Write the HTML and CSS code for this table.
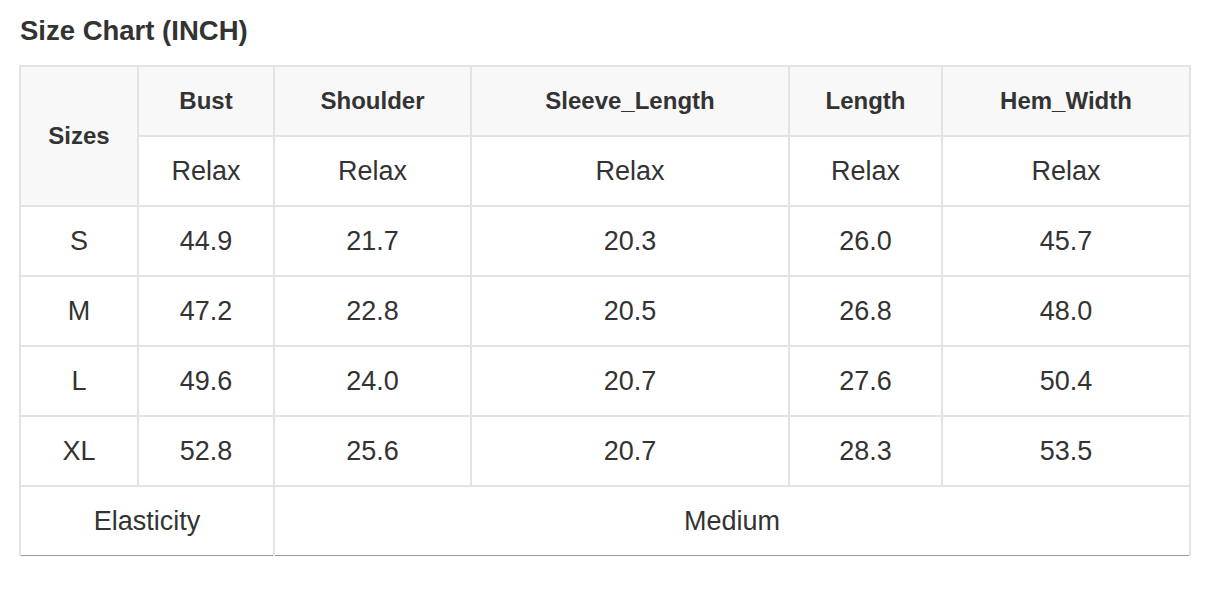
FILE: index.html
```html
<!DOCTYPE html>
<html>
<head>
<meta charset="utf-8">
<link rel="stylesheet" href="styles.css">
</head>
<body>
<div class="wrap">
  <h2 class="title">Size Chart (INCH)</h2>
  <table class="chart">
    <colgroup>
      <col class="c1"><col class="c2"><col class="c3"><col class="c4"><col class="c5"><col class="c6">
    </colgroup>
    <thead>
      <tr>
        <th rowspan="2" class="head">Sizes</th>
        <th class="head">Bust</th>
        <th class="head">Shoulder</th>
        <th class="head">Sleeve_Length</th>
        <th class="head">Length</th>
        <th class="head">Hem_Width</th>
      </tr>
      <tr>
        <td>Relax</td><td>Relax</td><td>Relax</td><td>Relax</td><td>Relax</td>
      </tr>
    </thead>
    <tbody>
      <tr><td>S</td><td>44.9</td><td>21.7</td><td>20.3</td><td>26.0</td><td>45.7</td></tr>
      <tr><td>M</td><td>47.2</td><td>22.8</td><td>20.5</td><td>26.8</td><td>48.0</td></tr>
      <tr><td>L</td><td>49.6</td><td>24.0</td><td>20.7</td><td>27.6</td><td>50.4</td></tr>
      <tr><td>XL</td><td>52.8</td><td>25.6</td><td>20.7</td><td>28.3</td><td>53.5</td></tr>
      <tr class="last"><td colspan="2">Elasticity</td><td colspan="4">Medium</td></tr>
    </tbody>
  </table>
</div>
</body>
</html>
```

FILE: styles.css
```css
html, body {
  margin: 0;
  padding: 0;
  background: #ffffff;
}
body {
  font-family: "Liberation Sans", Arial, sans-serif;
  color: #333333;
}
.wrap {
  padding: 15px 24px 0 19px;
}
.title {
  margin: 0 0 18px 1px;
  font-size: 27.5px;
  font-weight: bold;
  line-height: 32px;
  color: #333333;
}
.chart {
  border-collapse: collapse;
  table-layout: fixed;
  width: 1170px;
}
.c1 { width: 118px; }
.c2 { width: 136px; }
.c3 { width: 197px; }
.c4 { width: 318px; }
.c5 { width: 153px; }
.c6 { width: 248px; }
.chart th,
.chart td {
  border: 2px solid #e3e3e3;
  height: 68px;
  padding: 0;
  text-align: center;
  vertical-align: middle;
  font-size: 27px;
  font-weight: normal;
  color: #333333;
}
.chart th.head {
  background: #f8f8f8;
  font-weight: bold;
  font-size: 24px;
}
.chart tr.last td {
  border-bottom: 1px solid #9a9a9a;
}
```
